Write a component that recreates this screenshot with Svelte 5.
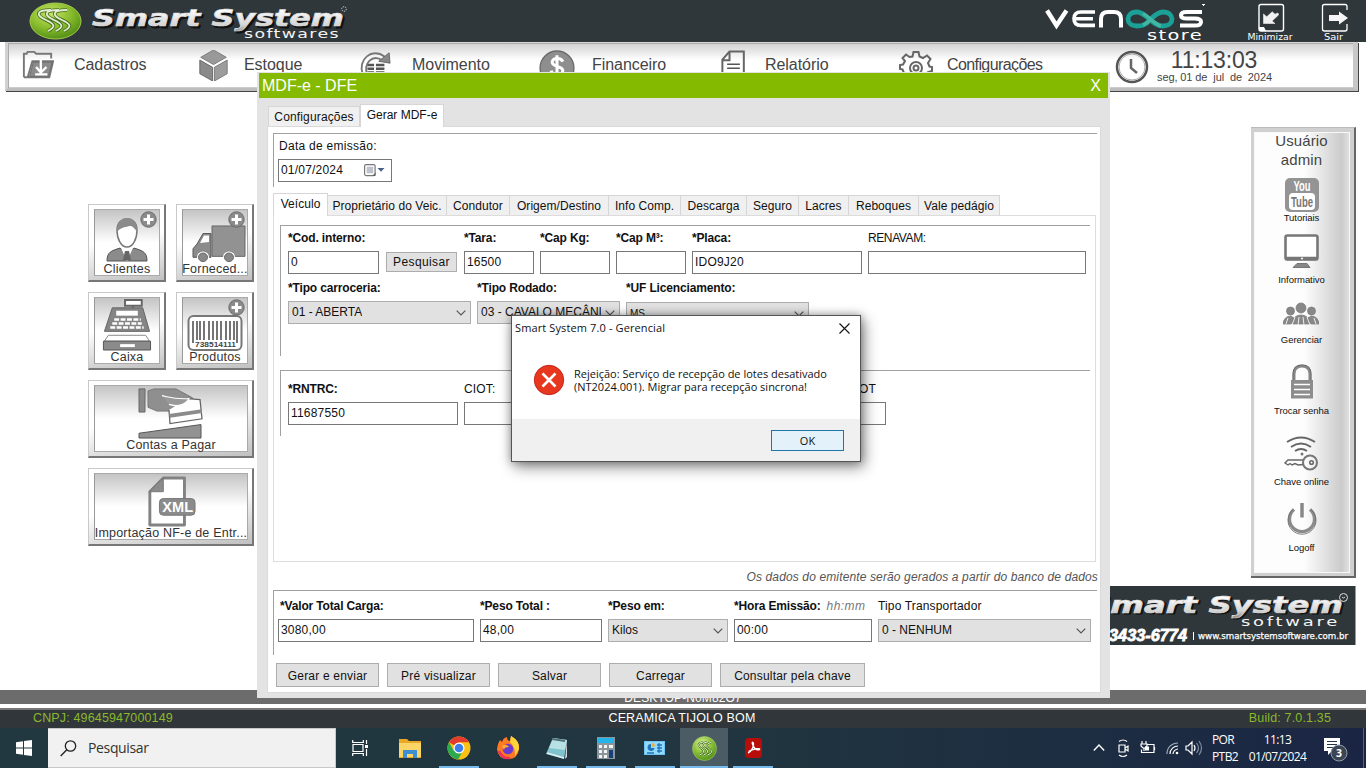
<script>
  const menu = [
    { id: 'folder', label: 'Cadastros', left: 16, gap: 20, size: 32 },
    { id: 'cube', label: 'Estoque', left: 192, gap: 15, size: 31 },
    { id: 'cycle', label: 'Movimento', left: 353, gap: 21, size: 32 },
    { id: 'money', label: 'Financeiro', left: 533, gap: 17, size: 36 },
    { id: 'doc', label: 'Relatório', left: 714, gap: 18, size: 27 },
    { id: 'gear', label: 'Configurações', left: 893, gap: 14, size: 34 }
  ];
  const innerTabs = [
    { t: 'Veículo', w: 55 }, { t: 'Proprietário do Veic.', w: 119 }, { t: 'Condutor', w: 63 },
    { t: 'Origem/Destino', w: 99 }, { t: 'Info Comp.', w: 72 }, { t: 'Descarga', w: 66 },
    { t: 'Seguro', w: 52 }, { t: 'Lacres', w: 50 }, { t: 'Reboques', w: 70 }, { t: 'Vale pedágio', w: 81 }
  ];
  const side = [
    { id: 'youtube', label: 'Tutoriais', h: 56, gap: -1 },
    { id: 'monitor', label: 'Informativo', h: 63, gap: 5 },
    { id: 'people', label: 'Gerenciar', h: 68, gap: 2 },
    { id: 'lock', label: 'Trocar senha', h: 72, gap: 5 },
    { id: 'key', label: 'Chave online', h: 65, gap: 4 },
    { id: 'power', label: 'Logoff', h: 60, gap: 5 }
  ];
  const actions = [
    { t: 'Gerar e enviar', w: 103 }, { t: 'Pré visualizar', w: 103 }, { t: 'Salvar', w: 103 },
    { t: 'Carregar', w: 103 }, { t: 'Consultar pela chave', w: 145 }
  ];
  const tasks = [
    { id: 'explorer' }, { id: 'chrome', open: true }, { id: 'firefox' }, { id: 'notepad', open: true },
    { id: 'calc', open: true }, { id: 'card', open: true }, { id: 'smart', open: true, active: true }, { id: 'acrobat', open: true }
  ];
</script>

{#snippet chevron()}
  <svg class="chev" width="10" height="6" viewBox="0 0 10 6"><path d="M.7.7 5 5 9.3.7" fill="none" stroke="#555" stroke-width="1.2" /></svg>
{/snippet}

{#snippet field(label, value, width, bold = true, note = '')}
  <div class="field" style="width:{width}px">
    <div class="label" class:bold>{label}{#if note}<em>{note}</em>{/if}</div>
    <div class="input">{value}</div>
  </div>
{/snippet}

{#snippet combo(label, value, width, bold = true)}
  <div class="field" style="width:{width}px">
    <div class="label" class:bold>{label}</div>
    <div class="combo"><span>{value}</span>{@render chevron()}</div>
  </div>
{/snippet}

{#snippet menuIcon(id, size)}
  <svg width={size} height={size} viewBox="0 0 34 34" fill="none" stroke="#555" stroke-width="2">
    {#if id === 'folder'}
      <path d="M2 29V4h3l1-2h7l2 2h16v5M2 29h25M6 29l5-17h22l-4 17z" stroke="#777" />
      <path d="M12 13h20l-4 15H8z" fill="#8b8b8b" stroke="#666" stroke-width="1" />
      <path d="M20 10v12m-5-4 5 6 6-6M14 26h13" stroke="#fff" stroke-width="2.4" />
    {:else if id === 'cube'}
      <path d="M17 0 31 8 17 16 3 8z" fill="#999" stroke="#777" stroke-width="1" />
      <path d="M2 11l14 8v15L2 26z" fill="#8a8a8a" stroke="#666" stroke-width="1" />
      <path d="M32 11l-14 8v15l14-8z" fill="#9c9c9c" stroke="#777" stroke-width="1" />
    {:else if id === 'cycle'}
      <path d="M4 26C-2 10 14-3 27 7M9 27C4 14 14 4 25 11" stroke="#777" />
      <path d="m32 3 1 11-12-2z" fill="#888" stroke="#666" stroke-width="1" />
      <path d="M9 16h7m2 0h9M9 20h7m2 0h9M9 24h7m2 0h9" stroke-width="2.6" />
    {:else if id === 'money'}
      <circle cx="17" cy="17" r="16" fill="#8e8e8e" stroke="#6b6b6b" stroke-width="1.3" />
      <path d="M22.500 11c-2-4.500-11-3.500-10 1 1 4.500 10 3 10 7.500 0 5.500-10 5.500-11 0M17 5v22" stroke="#fff" stroke-width="2.900" />
    {:else if id === 'doc'}
      <path d="M3 34V12L12 2h18v32M12 3v10H3" stroke-width="2.500" stroke="#666" />
      <path d="M9 18h16M9 23h16" stroke-width="2" />
    {:else}
      <g stroke="#666">
        <circle cx="17" cy="18" r="6" /><circle cx="17" cy="18" r="2.500" />
        <path d="m13.500 6.500 1-4.500h5l1 4.500 3.500 1.500 4-2.500 3.500 3.500-2.500 4 1.500 3.500 2.500.500v4l-4 1-1.500 3.500 2.500 4-3.500 3.500-4-2.500-3 1.500-1 3.500h-5l-1-3.500-3-1.500-4 2.500L2.500 27 5 23l-1.500-3.500-2.500-.500v-4l3-.500L6 11 3.500 8 7 4.500l3.500 2.500z" />
      </g>
    {/if}
  </svg>
{/snippet}

{#snippet plus()}
  <svg class="plus" width="17" height="17" viewBox="0 0 17 17"><circle cx="8.500" cy="8.500" r="7.700" fill="#8a8a8a" stroke="#6c6c6c" /><path d="M8.500 3.500v10M3.500 8.500h10" stroke="#fff" stroke-width="3" /></svg>
{/snippet}

{#snippet ball(s)}
  <svg width={s} height={s} viewBox="0 0 50 50">
    <defs><radialGradient id="ballfill" cx=".4" cy=".3" r=".75"><stop offset="0" stop-color="#dcf19a" /><stop offset=".5" stop-color="#8ec43b" /><stop offset="1" stop-color="#4c8d16" /></radialGradient></defs>
    <circle cx="25" cy="25" r="24" fill="url(#ballfill)" stroke="#b9dd7a" />
    <g fill="none">
      <path d="M22 12c-13 3-9 9-3 13s6 9-4 13M30 12c-13 3-9 9-3 13s6 9-4 13M38 13c-13 3-9 9-3 13s6 8-4 12" stroke="#3d6e1a" stroke-width="4" />
      <path d="M22 12c-13 3-9 9-3 13s6 9-4 13M30 12c-13 3-9 9-3 13s6 9-4 13M38 13c-13 3-9 9-3 13s6 8-4 12" stroke="#eef6dc" stroke-width="2" />
    </g>
  </svg>
{/snippet}

<div class="screen">
  <header>
    <svg width="1366" height="42" viewBox="0 0 1366 42">
      <defs>
        <linearGradient id="silver" x1="0" y1="0" x2="0" y2="1"><stop offset="0.2" stop-color="#fff" /><stop offset=".75" stop-color="#d5d5d5" /><stop offset="1" stop-color="#8d8d8d" /></linearGradient>
        <radialGradient id="globe" cx=".4" cy=".3" r=".75"><stop offset="0" stop-color="#c7e463" /><stop offset=".55" stop-color="#87bb2c" /><stop offset="1" stop-color="#4b8a12" /></radialGradient>
      </defs>
      <ellipse cx="55.5" cy="21" rx="25.5" ry="18" fill="url(#globe)" stroke="#a6cc4f" />
      <g fill="none">
        <path d="M51 10c-17 0-14 6-5 10s10 7 2 11M59 10c-17 0-14 6-5 10s10 7 2 11M67 10c-17 0-14 6-5 10s10 7 2 11" stroke="#44701d" stroke-width="3.600" />
        <path d="M51 10c-17 0-14 6-5 10s10 7 2 11M59 10c-17 0-14 6-5 10s10 7 2 11M67 10c-17 0-14 6-5 10s10 7 2 11" stroke="#e4ecd2" stroke-width="1.800" />
      </g>
      <g font-family="'DejaVu Sans', sans-serif" font-weight="bold" font-style="italic" font-size="23.500">
        <text x="94" y="27.500" textLength="252" lengthAdjust="spacingAndGlyphs" fill="#111" stroke="#111" stroke-width=".8">Smart System</text>
        <text x="92" y="26" textLength="252" lengthAdjust="spacingAndGlyphs" fill="url(#silver)" stroke="#ddd" stroke-width=".7">Smart System</text>
      </g>
      <text x="244" y="38" font-family="'DejaVu Sans', sans-serif" font-size="12.500" textLength="96" lengthAdjust="spacingAndGlyphs" fill="#f4f4f4" style="letter-spacing:1px">softwares</text>
      <circle cx="344" cy="9" r="2.300" fill="none" stroke="#ddd" stroke-dasharray="1.2 1" />

      <g fill="none" stroke="#fff" stroke-width="4.400">
        <path d="M1047 10.500 1056.500 25.500 1066.500 10.500" />
        <path d="M1095 12h-14q-7 0-7 6.700t7 6.700h14M1074 18.700h19" stroke-width="3.600" />
        <path d="M1101 27.500V19q0-7 7-7h6q7 0 7 7v8.500" stroke-width="4" />
        <path d="M1202 12h-15q-6 0-6 3.300t6 3.300h8q6 0 6 3.500t-6 3.500h-15" stroke-width="4" />
      </g>
      <path d="M1151 19c-6 7-10 7-14 7-12 0-12-14 0-14 9 0 15 14 26 14 12 0 12-14 0-14-4 0-7 2-12 7" fill="none" stroke="#1ba098" stroke-width="4.800" />
      <path d="M1143 13.500c6 3 12 11 18 12.500M1151 19c-3 3-5 5-8 6" fill="none" stroke="#5fc6ab" stroke-width="3.500" opacity=".6" />
      <text x="1147" y="40" font-family="'DejaVu Sans', sans-serif" font-size="14" textLength="56" lengthAdjust="spacingAndGlyphs" fill="#fff" style="letter-spacing:1px">store</text>
      <path d="M1202 4.500h3M1203 5.500h1" stroke="#fff" />

      <rect x="1259" y="4.500" width="24.500" height="26.500" rx="2" fill="none" stroke="#fff" stroke-width="1.400" />
      <path d="M1263.500 23.500V14l3.200 2.800 5.500-5 2.800 2.400 3-1.200.5 2-6.500 6 3 2.500z" fill="#f2f2f2" stroke="#f2f2f2" stroke-width=".6" />
      <path d="M1259 27h5l2 4h-7z" fill="#fff" />
      <path d="M1347 10V6.500q0-2-2-2h-20.500q-2 0-2 2V29q0 2 2 2H1345q2 0 2-2v-5" fill="none" stroke="#fff" stroke-width="1.300" />
      <path d="M1329 15h10v-3.500l9 6.500-9 6.500V21h-10z" fill="#f5f5f5" />
      <g font-family="'DejaVu Sans', sans-serif" font-size="8" fill="#fff">
        <text x="1247.500" y="39.500" textLength="45" lengthAdjust="spacingAndGlyphs">Minimizar</text>
        <text x="1324" y="39.500" textLength="19" lengthAdjust="spacingAndGlyphs">Sair</text>
      </g>
    </svg>
  </header>

  <nav class="menubar">
    {#each menu as m, i}
      <div class="mitem" class:tight={m.id === 'gear'} style="width:{(menu[i + 1]?.left ?? 1107) - m.left}px; gap:{m.gap}px">
        {@render menuIcon(m.id, m.size)}<span>{m.label}</span>
      </div>
    {/each}
    <div class="clock">
      <svg width="34" height="34" viewBox="0 0 34 34" fill="none"><circle cx="17" cy="17" r="15" stroke="#555" stroke-width="2.500" /><circle cx="17" cy="17" r="13" stroke="#aaa" /><path d="M16 9v9l6 5" stroke="#666" stroke-width="2.500" /></svg>
      <div><b>11:13:03</b><small>seg, 01 de&nbsp; jul&nbsp; de&nbsp; 2024</small></div>
    </div>
  </nav>

  <main>
    <section class="tiles">
      <div class="tile"><div class="face">
        {@render plus()}
        <svg width="42" height="46" viewBox="0 0 42 46"><path d="M1 44c0-9 4-10 13-13l7 6 7-6c9 3 13 4 13 13z" fill="#8b8b8b" stroke="#555" /><path d="m15 31 6 13 6-13-6 3z" fill="#fff" /><path d="m19 34h4l2 9h-8z" fill="#666" /><path d="M11 13C11-2 31-2 31 13c0 9-4 17-10 17S11 22 11 13z" fill="#fff" stroke="#777" stroke-width="1.500" /><path d="M11 15C9-3 33-4 31 15c-3-5-5-6-7-6-4 1-9 1-13 6z" fill="#8b8b8b" /></svg>
        <span>Clientes</span></div></div>
      <div class="tile"><div class="face truck">
        {@render plus()}
        <svg width="54" height="38" viewBox="0 0 54 40" preserveAspectRatio="none"><path d="M20 1h33v32H20z" fill="#929292" stroke="#666" /><path d="M19 33V9h-8L5 20l-4 5v9h18z" fill="#8b8b8b" stroke="#555" /><path d="M17 11h-5l-4 8 9-1z" fill="#fff" /><circle cx="11" cy="34" r="6" fill="#fff" /><circle cx="11" cy="34" r="4.500" fill="#888" stroke="#666" /><circle cx="37" cy="34" r="6" fill="#fff" /><circle cx="37" cy="34" r="4.500" fill="#888" stroke="#666" /></svg>
        <span>Forneced...</span></div></div>
      <div class="tile"><div class="face">
        <svg width="50" height="53" viewBox="0 0 50 54"><path d="M23 2h17v6H23zM31 8v3" fill="#fff" stroke="#666" stroke-width="2" /><path d="M10 10h31l7 24H2z" fill="#858585" stroke="#666" /><path d="M14 13h22v5H14z" fill="#fff" /><path d="M12 22h27M10 26h30M8 30h34" stroke="#fff" stroke-width="2.500" stroke-dasharray="5 1.500" /><path d="M6 38h38l4 6H2z" fill="#fff" stroke="#888" /><path d="M1 44h48v9H1z" fill="#8b8b8b" stroke="#555" /><path d="M18 47h15v3H18z" fill="#fff" /></svg>
        <span>Caixa</span></div></div>
      <div class="tile"><div class="face">
        {@render plus()}
        <svg width="56" height="36" viewBox="0 0 56 36"><rect x="1.500" y="1" width="53" height="34" rx="5" fill="#fff" stroke="#777" stroke-width="2" /><path d="M6 6v22M10 6v19M13 6v19M17 6v19M22 6v19M26 6v19M30 6v19M34 6v19M39 6v19M43 6v19M47 6v19M50 6v22" stroke="#666" stroke-width="1.800" /><text x="8" y="31.500" font-size="7" font-weight="bold" font-family="'Liberation Sans', sans-serif" textLength="41" lengthAdjust="spacingAndGlyphs" fill="#444">738514111</text></svg>
        <span>Produtos</span></div></div>
      <div class="tile wide"><div class="face">
        <svg width="66" height="52" viewBox="0 0 66 54" preserveAspectRatio="none"><path d="M1 2h6v24H1z" fill="#8b8b8b" stroke="#666" /><path d="M10 4 16 2h22l16 9 7 7-6 7H19l-9-4z" fill="#8f8f8f" stroke="#777" /><path d="M31 24 32 38l32-5-2-20-13-1" fill="#fff" stroke="#666" stroke-width="1.300" /><path d="m31 28 33-5v4l-32 5z" fill="#8b8b8b" /><path d="M24 9c9 2 15 4 27 3-3 6-11 9-20 6" fill="#999" stroke="#fff" stroke-width="1.200" /><path d="M1 53V48l62-9v14z" fill="#929292" stroke="#555" /></svg>
        <span>Contas a Pagar</span></div></div>
      <div class="tile wide"><div class="face">
        <svg width="50" height="51" viewBox="0 0 52 52" preserveAspectRatio="none"><path d="M4 16 18 2h22v48H4z" fill="#fff" stroke="#828282" stroke-width="3" stroke-linejoin="round" /><path d="M3 16 18 2v14z" fill="#8b8b8b" stroke="#777" /><rect x="14" y="23" width="37" height="17" rx="4" fill="#8b8b8b" stroke="#777" /><text x="17" y="37" font-size="15" font-weight="bold" font-family="'Liberation Sans', sans-serif" textLength="32" lengthAdjust="spacingAndGlyphs" fill="#fff">XML</text></svg>
        <span>Importação NF-e de Entr...</span></div></div>
    </section>

    <div class="right">
      <aside>
        <div class="inner">
          <div class="user">Usuário<br />admin</div>
          {#each side as s}
            <div class="sitem" style="height:{s.h}px">
              <svg width="36" height="36" viewBox="0 0 36 36" fill="none" stroke="#666" stroke-width="2">
                {#if s.id === 'youtube'}
                  <rect x="1" y="1" width="34" height="34" rx="5" fill="#949494" stroke="none" /><rect x="5" y="16" width="26" height="17" rx="4" fill="#fff" stroke="none" />
                  <g font-family="'Liberation Sans', sans-serif" font-weight="bold" stroke="none"><text x="9.500" y="13.500" font-size="14" fill="#fff" textLength="17" lengthAdjust="spacingAndGlyphs">You</text><text x="7" y="30" font-size="15" fill="#777" textLength="22" lengthAdjust="spacingAndGlyphs">Tube</text></g>
                {:else if s.id === 'monitor'}
                  <rect x="2.500" y="2.500" width="32" height="24" rx="2" fill="#fff" stroke="#777" stroke-width="2.600" /><path d="M2 25.500h33" stroke-width="3.500" stroke="#777" /><circle cx="19" cy="25.500" r="1" fill="#fff" stroke="none" /><path d="M14 30.500h10l3 4H10z" fill="#888" stroke="#777" stroke-width="1" />
                {:else if s.id === 'people'}
                  <g fill="#888" stroke="#777" stroke-width=".7"><circle cx="7.500" cy="15" r="4" /><circle cx="28.500" cy="15" r="4" /><circle cx="18" cy="12" r="5" /><path d="M0 28q1-8 8-8l3 2-3 6zM36 28q-1-8-8-8l-3 2 3 6zM9 28q1-9 9-9t9 9z" /></g><path d="m5 22-2 6m9-7-3 8m7-8-1 8m5-8 1 8m3-8 3 8m4-7 2 6" stroke="#eee" stroke-width="1" />
                {:else if s.id === 'lock'}
                  <path d="M10 17V10q0-8 8-8t8 8v7" stroke-width="3" stroke="#888" /><path d="M9 17V10q0-9 9-9t9 9v7" stroke-width=".8" /><rect x="7" y="16" width="22" height="18.500" fill="#8d8d8d" stroke="none" /><path d="M10 20.500h16M10 25.500h16M10 30.500h16" stroke="#fff" stroke-width="1.300" />
                {:else if s.id === 'key'}
                  <path d="M4 6q14-9 28 0M8 11q10-7 20 0M12 15q6-4 12 0" /><circle cx="19" cy="18" r="1.500" fill="#777" stroke="none" /><circle cx="27" cy="26.500" r="7" stroke="#777" /><circle cx="28.500" cy="26.500" r="1.800" stroke-width="1.500" /><path d="M20 24H5l-3 3 3 2 2-1.500L9 29l3-1.500 3 1.500 5-.5" stroke-width="1.400" />
                {:else}
                  <path d="M10 8.500a12.500 12.500 0 1 0 16 0" stroke="#8b8b8b" stroke-width="3.300" /><path d="M9 8.500a14 14 0 1 0 18 0" stroke-width=".8" /><path d="M18 2v14.500" stroke="#888" stroke-width="3.500" />
                {/if}
              </svg>
              <span style="margin-top:{s.gap}px">{s.label}</span>
            </div>
          {/each}
        </div>
      </aside>
      <svg class="banner" width="285" height="59" viewBox="0 0 285 59">
        <rect width="284.500" height="59" fill="#30373a" />
        <g font-family="'DejaVu Sans', sans-serif" font-weight="bold" font-style="italic" font-size="23">
          <text x="18" y="28" textLength="256" lengthAdjust="spacingAndGlyphs" fill="#111" stroke="#111" stroke-width=".8">Smart System</text>
          <text x="16" y="26.500" textLength="256" lengthAdjust="spacingAndGlyphs" fill="url(#silver)" stroke="#ddd" stroke-width=".7">Smart System</text>
        </g>
        <text x="170" y="40" font-family="'DejaVu Sans', sans-serif" font-size="13" textLength="99" lengthAdjust="spacingAndGlyphs" fill="#f4f4f4" style="letter-spacing:2px">software</text>
        <text x="38" y="55" font-family="'Liberation Sans', sans-serif" font-weight="bold" font-style="italic" font-size="16.500" textLength="78" lengthAdjust="spacingAndGlyphs" fill="#fff" stroke="#fff" stroke-width=".8">3433-6774</text>
        <path d="M122.500 46v8" stroke="#fff" />
        <text x="127" y="53" font-family="'DejaVu Sans', sans-serif" font-size="9" textLength="150" lengthAdjust="spacingAndGlyphs" fill="#fff" stroke="#fff" stroke-width=".25">www.smartsystemsoftware.com.br</text>
        <circle cx="272.500" cy="11.500" r="4" fill="none" stroke="#ddd" /><path d="M271 11q1.500 2 3 0" fill="none" stroke="#ddd" />
      </svg>
    </div>
  </main>

  <div class="hostbar">DESKTOP-N0M82O7</div>
  <footer><span class="g">CNPJ: 49645947000149</span><span>CERAMICA TIJOLO BOM</span><span class="g r">Build: 7.0.1.35</span></footer>

  <div class="taskbar">
    <div class="start"><svg width="16" height="16" viewBox="0 0 16 16"><path d="M0 2.300 7 1.300V7.500H0zM8 1.100 16 0v7.500H8zM0 8.500h7v6.200L0 13.700zM8 8.500h8V16L8 14.900z" fill="#fff" /></svg></div>
    <div class="search"><svg width="17" height="17" viewBox="0 0 17 17"><circle cx="10.500" cy="6" r="5.200" fill="none" stroke="#222" stroke-width="1.300" /><path d="M6.800 9.800.7 16" stroke="#222" stroke-width="1.400" /></svg><span>Pesquisar</span></div>
    <div class="task"><svg width="17" height="16" viewBox="0 0 17 16" fill="none" stroke="#fff" stroke-width="1.200"><path d="M.7 0v2.500h10.600V0M.7 16v-2.500h10.600V16M1 4.500h10v7H1zM14.500 0v4M14.500 9v7" /><path d="M13 5h3v3h-3z" fill="#fff" stroke="none" /></svg></div>
    {#each tasks as t}
      <div class="task" class:open={t.open} class:active={t.active} class:first={t.id === 'explorer'}>
        {#if t.id === 'smart'}
          {@render ball(25)}
        {:else}
          <svg width="24" height="24" viewBox="0 0 24 24">
            {#if t.id === 'explorer'}
              <path d="M1 3h8l2 2h12v17H1z" fill="#e9a825" /><path d="M1 7h22v14H1z" fill="#fbd667" /><path d="M5 22v-8h14v8h-4v-4H9v4z" fill="#3d8fd1" />
            {:else if t.id === 'chrome'}
              <circle cx="12" cy="12" r="11.500" fill="#fbc116" /><path d="M12 12 2 6.200A11.500 11.500 0 0 1 22 6.300H12z" fill="#e33b2e" /><path d="M2 6.200A11.500 11.500 0 0 0 11 23.400L16.500 14 12 12 7 15z" fill="#2da94f" /><circle cx="12" cy="12" r="5.500" fill="#fff" /><circle cx="12" cy="12" r="4.300" fill="#3b7ded" />
            {:else if t.id === 'firefox'}
              <path d="M2 8 4 4l2 2q1-4 5-5 0 4 3 4l1-5q9 5 8 13-1 10-11 10T1 13z" fill="#ff7a22" /><path d="M15 0q9 5 8 13l-4 7q1-8-5-14z" fill="#ffd43b" /><path d="M3 15q3 8 11 7" fill="none" stroke="#ef2f5e" stroke-width="2.500" /><circle cx="12" cy="13" r="5.300" fill="#6a3bd0" /><path d="M6 10q4-3 7 1-5 0-5 3z" fill="#ffaa30" />
            {:else if t.id === 'notepad'}
              <path d="m8 2 14 2-3 19L1 18z" fill="#7fc3cf" /><path d="m8 2 14 2-2 10L4 12z" fill="#b7e1e5" /><path d="m7 3 13 2" stroke="#51707c" stroke-width="2" /><path d="m22 4-2 19 2-2z" fill="#d4d8d8" /><path d="m2 17 17 5" stroke="#e6eef0" stroke-width="1.500" />
            {:else if t.id === 'calc'}
              <path d="M3 1h18v22H3z" fill="#8b969c" /><path d="M4 2h16v5H4z" fill="#25b4ea" /><path d="M5 9h3v3H5zm5 0h3v3h-3zm-5 5h3v3H5zm5 0h3v3h-3zm-5 5h3v3H5zm5 0h3v3h-3zm5-10h4v3h-4z" fill="#f4f5f5" /><path d="M15 14h4v8h-4z" fill="#173f7c" />
            {:else if t.id === 'card'}
              <path d="M1 5h21v14H1z" fill="#6cc3f4" /><path d="M2 6h19v12H2z" fill="#92dafb" /><path d="M8 8a3.500 3.500 0 1 0 3.500 4H8z" fill="#1f75bd" /><path d="M9 7a3.500 3.500 0 0 1 3 3.500H9z" fill="#e9ad3c" /><path d="M14 9h5M14 12h5M14 15h5M4 17h7M16 7v10" stroke="#2174bb" stroke-width="1.300" />
            {:else}
              <rect x="4" y="2" width="17" height="20" rx="4" fill="#b80d08" /><path d="M7 17c3-1 5.500-5.500 5.500-9 0-2.500-2-2.500-1 0 1 4 3.500 6.500 7 5.500 1-1.500-6-1-11 2" fill="none" stroke="#fff" stroke-width="1.400" />
            {/if}
          </svg>
        {/if}
      </div>
    {/each}
    <div class="tray">
      <svg width="110" height="20" viewBox="0 0 110 20" fill="none" stroke="#fff" stroke-width="1.200">
        <path d="m.8 12.500 5.200-5.500 5.200 5.500" stroke-width="1.400" />
        <path d="M26 7h6v7h-6zM32 10l3-2v5l-3-2M26 3.500q4-3 8 0M26 17q4 3 8 0" />
        <path d="M54 6.500h7v8H48.500v-3M61.500 9v3" /><path d="M56 8.500h-4v4h4z" fill="#fff" stroke="none" /><path d="M49 3v3m4-3v3m-5 0h6v2l-2 2h-2l-2-2zM51 10v3" />
        <path d="M74 16C74 9 79 5 85 5" stroke="#9aabbc" /><path d="M77 16c0-5 4-8 8-8M80 16c0-3 3-5 5-5" /><circle cx="84" cy="15" r="1.300" fill="#fff" stroke="none" />
        <path d="M93 8h2l4-4v12l-4-4h-2zM101 7q2 3 0 6" /><path d="M103.500 5q4 5 0 10M106 3q5 7 0 14" stroke="#7d8da0" />
      </svg>
      <div class="lang"><span>POR</span><span>PTB2</span></div>
      <div class="time"><span>11:13</span><span>01/07/2024</span></div>
      <svg class="notif" width="26" height="26" viewBox="0 0 26 26"><path d="M1 1h16v13H9l-4 4v-4H1z" fill="#fff" /><path d="M4 4.500h10M4 7.500h10M4 10.500h10" stroke="#26364b" /><circle cx="16" cy="16" r="8" fill="#3b4553" stroke="#929ba8" /><text x="16" y="20" text-anchor="middle" font-size="10.500" font-family="'Open Sans', sans-serif" font-weight="bold" fill="#fff">3</text></svg>
      <i></i>
    </div>
  </div>

  <section class="window">
    <div class="title"><span>MDF-e - DFE</span><span>X</span></div>
    <div class="tabs outer"><div class="tab" style="width:92px">Configurações</div><div class="tab on" style="width:84px">Gerar MDF-e</div></div>
    <div class="page">
      <div class="group date">
        <div class="field" style="width:114px"><div class="label">Data de emissão:</div>
          <div class="input"><span>01/07/2024</span><svg width="21" height="13" viewBox="0 0 21 13"><rect x=".6" y=".6" width="10.500" height="11" rx="1.500" fill="#fff" stroke="#777" stroke-width="1.200" /><path d="M2.500 4h7M2.500 6h7M2.500 8h7M4 2.500v7M6 2.500v7M8 2.500v7" stroke="#8c97aa" stroke-width=".7" /><path d="m8 12 3.500-3.500V12z" fill="#666" /><path d="M13.500 4h7L17 7.800z" fill="#47608a" /></svg></div></div>
      </div>
      <div class="tabs nested">
        {#each innerTabs as tab, i}<div class="tab" class:on={i === 0} style="width:{tab.w}px">{tab.t}</div>{/each}
      </div>
      <div class="sheet">
        <div class="group vehicle">
          <div class="row">
            {@render field('*Cod. interno:', '0', 91)}
            <div class="btn pesq">Pesquisar</div>
            {@render field('*Tara:', '16500', 70)}
            {@render field('*Cap Kg:', '', 70)}
            {@render field('*Cap M³:', '', 70)}
            {@render field('*Placa:', 'IDO9J20', 170)}
            <div class="renavam">{@render field('RENAVAM:', '', 218, false)}</div>
          </div>
          <div class="row">
            {@render combo('*Tipo carroceria:', '01 - ABERTA', 183)}
            {@render combo('*Tipo Rodado:', '03 - CAVALO MECÂNICO', 143)}
            <div class="uf">{@render combo('*UF Licenciamento:', 'MS', 183)}</div>
          </div>
        </div>
        <div class="group rntrc">
          <div class="row">
            {@render field('*RNTRC:', '11687550', 170)}
            {@render field('CIOT:', '', 170, false)}
            <div class="ciot">{@render field('CIOT', '', 246, false)}</div>
          </div>
        </div>
      </div>
      <div class="hint">Os dados do emitente serão gerados a partir do banco de dados</div>
      <div class="group totals">
        <div class="row">
          {@render field('*Valor Total Carga:', '3080,00', 196)}
          {@render field('*Peso Total :', '48,00', 122)}
          {@render combo('*Peso em:', 'Kilos', 120)}
          {@render field('*Hora Emissão:', '00:00', 138, true, 'hh:mm')}
          {@render combo('Tipo Transportador', '0 - NENHUM', 213, false)}
        </div>
      </div>
      <div class="actions">{#each actions as a}<div class="btn" style="width:{a.w}px">{a.t}</div>{/each}</div>
    </div>
  </section>

  <section class="dialog">
    <div class="dtitle"><span>Smart System 7.0 - Gerencial</span><svg width="11" height="11" viewBox="0 0 11 11"><path d="m.5.5 10 10m0-10-10 10" stroke="#111" stroke-width="1.100" /></svg></div>
    <div class="dbody">
      <svg width="32" height="32" viewBox="0 0 32 32"><circle cx="16" cy="16" r="14.700" fill="#e8371f" stroke="#c4281b" /><path d="m9.500 9.500 13 13m0-13-13 13" stroke="#fff" stroke-width="2.600" /></svg>
      <p>Rejeição: Serviço de recepção de lotes desativado<br />(NT2024.001). Migrar para recepção sincrona!</p>
    </div>
    <div class="dfoot"><div class="ok">OK</div></div>
  </section>
</div>

<style>
  :global(body) { margin: 0; overflow: hidden; background: #fff; }
  .screen, .screen * { box-sizing: border-box; }
  .screen { position: relative; width: 1366px; height: 768px; overflow: hidden; display: flex; flex-direction: column; background: #fff; font: 12px/16px 'Liberation Sans', Arial, sans-serif; letter-spacing: .2px; color: #111; white-space: nowrap; }
  svg { display: block; flex: none; }
  svg text { letter-spacing: 0; }
  header { height: 42px; background: #30373a; }

  .menubar { height: 49px; margin: 0 8px 0 5px; display: flex; align-items: flex-start; border: 3px solid #d2d2d2; border-top: 1px solid #d8d8d8; border-right: 5px solid #c8c8c8; border-bottom: 3px solid #bdbdbd; padding-left: 14px; box-shadow: inset 1px 1px #aaa, inset 0 -1px #ccc, 1px 1px #444; background: linear-gradient(#cfcfcf, #fff 17px, #fff); }
  .mitem { display: flex; padding-top: 7px; font-size: 16px; line-height: 30px; color: #444; letter-spacing: -.05px; }
  .tight { letter-spacing: -.6px; }
  .clock { display: flex; gap: 8px; padding-top: 7px; color: #444; }
  .clock svg { margin-left: 2px; }
  .clock > div { display: flex; flex-direction: column; align-items: center; margin-top: -2px; }
  .clock b { font-weight: normal; font-size: 23px; line-height: 25px; letter-spacing: -.2px; margin-left: -1px; }
  .clock small { font-size: 11px; line-height: 9px; letter-spacing: -.1px; }

  main { flex: 1; min-height: 0; display: flex; justify-content: space-between; }
  .tiles { display: grid; grid-template-columns: 78px 78px; grid-auto-rows: 78px; gap: 10px; margin: 113px 0 0 88px; }
  .tile { padding: 4px 4px 4px 5px; border: 1px solid #c9c9c9; border-right: 2px solid #777; border-bottom: 2px solid #777; background: linear-gradient(170deg, #fff 45%, #c0c0c0); }
  .wide { grid-column: span 2; }
  .face { position: relative; height: 100%; display: flex; flex-direction: column; align-items: center; justify-content: flex-end; background: linear-gradient(#c4c4c4, #fff 50%); border: 1px solid #aaa; border-left-color: #999; }
  .face span { font-size: 12.5px; line-height: 13px; height: 12px; color: #333; }
  .truck svg:not(.plus) { margin-left: 7px; }
  .plus { position: absolute; top: 1px; right: 2px; }

  .right { display: flex; flex-direction: column; align-items: flex-end; padding: 36px 10px 0 0; }
  aside { width: 105px; height: 451px; padding: 4px 4px 3px 3px; background: #d0d0d0; border-right: 2px solid #666; border-bottom: 2px solid #666; border-top: 1px solid #bbb; }
  .inner { height: 100%; border: 1px solid #f8f8f8; background: linear-gradient(90deg, #fdfdfd 0 52%, #ececec 66%, #cbcbcb 92%, #e0e0e0); display: flex; flex-direction: column; align-items: center; padding-right: 1px; }
  .user { font-size: 15px; line-height: 18.500px; height: 37px; margin-top: -1px; color: #444; text-align: center; letter-spacing: .1px; margin-bottom: 8px; }
  .sitem { display: flex; flex-direction: column; align-items: center; font-size: 9.500px; letter-spacing: -.05px; }
  .sitem span { line-height: 12px; }
  .banner { margin-top: 8px; }

  .hostbar { height: 14px; background: #6c6c6c; color: #fff; text-align: center; font-size: 12px; line-height: 16px; letter-spacing: .1px; }
  footer { height: 20px; margin-top: 4px; border-top: 2px solid #777; background: #30363a; display: grid; grid-template-columns: 1fr auto 1fr; padding: 0 35px 0 33px; line-height: 17px; color: #fff; font-size: 12.500px; letter-spacing: .15px; }
  .g { color: #8bb82c; font-size: 12.500px; }
  .r { text-align: right; }

  .taskbar { height: 40px; display: flex; background: linear-gradient(90deg, #213841, #20353f 55%, #1c2b42 85%, #1a2544); color: #fff; font-family: 'Open Sans', sans-serif; letter-spacing: 0; }
  .start { width: 48px; display: grid; place-items: center; }
  .search { width: 288px; background: #f1f1f1; border: 1px solid #c8c8c8; border-left: 0; display: flex; align-items: center; gap: 11px; padding-left: 12px; color: #333; font-size: 14px; letter-spacing: -.35px; }
  .task { width: 48px; margin-right: 1px; display: flex; align-items: center; justify-content: center; position: relative; }
  .first { margin-left: 1px; }
  .active { background: #4b5c65; }
  .open::after { content: ''; position: absolute; left: 4px; right: 4px; bottom: 0; height: 2px; background: #76b9ed; }
  .active::after { left: 0; right: 0; }
  .tray { margin-left: auto; width: 273px; display: flex; align-items: center; font-size: 12px; line-height: 17px; }
  .tray span { display: block; }
  .lang { margin-left: 9px; width: 29px; letter-spacing: -.6px; }
  .time { width: 73px; text-align: center; letter-spacing: -.6px; }
  .notif { margin: 3px 0 0 9px; }
  .tray i { width: 1px; height: 40px; margin-left: auto; margin-right: 2px; background: #56627a; }

  .window { position: absolute; left: 257px; top: 72px; width: 853px; height: 626px; padding: 1px 2px 0; background: #e3e3e3; color: #111; }
  .title { height: 25px; background: #84bb00; color: #fff; display: flex; justify-content: space-between; padding: 0 7px 0 3px; font-size: 16px; line-height: 25px; letter-spacing: 0; }
  .tabs { display: flex; align-items: flex-end; }
  .tab { height: 20px; border: 1px solid #d6d6d6; border-left-width: 0; border-bottom: 0; background: #f0f0f0; line-height: 20px; text-align: center; letter-spacing: .05px; }
  .tab.on { background: #fff; height: 23px; position: relative; margin-bottom: -1px; line-height: 21px; border-left-width: 1px; }
  .outer { height: 28px; padding-left: 9px; }
  .outer .tab { border-left-width: 1px; letter-spacing: .15px; }
  .outer .on { letter-spacing: 0; }
  .page { margin: 0 8px; width: 834px; height: 567px; background: #fff; border: 1px solid #dadada; padding: 6px 0 0 5px; }
  .group { border-top: 1px solid #a0a0a0; border-left: 1px solid #a0a0a0; width: 824px; }
  .date { height: 54px; padding: 4px 0 0 4px; }
  .date .label { padding-left: 1px; letter-spacing: .28px; }
  .date .input { justify-content: space-between; padding: 0 6px 0 2px; align-items: center; }
  .date .input span { line-height: 21px; }
  .nested { height: 22px; margin-top: 6px; }
  .sheet { width: 823px; height: 347px; border: 1px solid #dcdcdc; padding: 9px 0 0 6px; }
  .sheet .group { width: 810px; }
  .vehicle { height: 131px; padding: 4px 0 0 7px; }
  .rntrc { height: 66px; margin-top: 14px; padding: 10px 0 0 7px; }
  .totals { height: 65px; padding: 7px 0 0 4px; }
  .row { display: flex; gap: 6px; }
  .row + .row { margin-top: 6px; }
  .field { flex: none; display: flex; flex-direction: column; gap: 5px; }
  .label { height: 16px; line-height: 16px; letter-spacing: .15px; }
  .label.bold { font-weight: bold; letter-spacing: -.15px; }
  .label em { font-weight: normal; color: #777; margin-left: 6px; letter-spacing: .4px; }
  .renavam .label { letter-spacing: -.4px; }
  .totals .field:first-child .label { padding-left: 2px; }
  .input { height: 23px; border: 1px solid #777; background: #fff; padding: 0 2px; line-height: 20px; display: flex; }
  .combo { height: 23px; border: 1px solid #adadad; background: #e1e1e1; padding: 0 4px 0 3px; line-height: 21px; display: flex; align-items: center; justify-content: space-between; gap: 4px; letter-spacing: 0; }
  .combo span { overflow: hidden; min-width: 0; }
  .uf .combo { margin-top: 1px; font-size: 10px; }
  .ciot .label { text-align: right; padding-right: 10px; }
  .btn { height: 24px; border: 1px solid #adadad; background: #e1e1e1; line-height: 24px; text-align: center; }
  .pesq { width: 71px; height: 20px; line-height: 18px; margin: 22px 1px 0; letter-spacing: .4px; }
  .hint { width: 825px; height: 28px; line-height: 30px; text-align: right; font-style: italic; color: #555; letter-spacing: .13px; }
  .actions { display: flex; gap: 8px; margin: 8px 0 0 3px; }

  .dialog { position: absolute; left: 511px; top: 315px; width: 350px; height: 147px; background: #fff; border: 1px solid #555; box-shadow: 3px 5px 14px rgba(0, 0, 0, .45), 0 0 8px rgba(0, 0, 0, .3); display: flex; flex-direction: column; font-family: 'Open Sans', sans-serif; color: #111; font-size: 11px; letter-spacing: 0; }
  .dtitle { height: 24px; display: flex; justify-content: space-between; align-items: center; padding: 0 10px 0 3px; letter-spacing: .12px; }
  .dbody { flex: 1; display: flex; gap: 9px; padding: 24px 0 0 21px; }
  .dbody p { margin: 3px 0 0; line-height: 13px; }
  .dfoot { height: 42px; background: #f0f0f0; display: flex; justify-content: flex-end; padding: 11px 16px 0 0; }
  .ok { width: 73px; height: 21px; border: 1px solid #1f77a8; background: #e3f1fa; text-align: center; line-height: 20px; }
</style>
